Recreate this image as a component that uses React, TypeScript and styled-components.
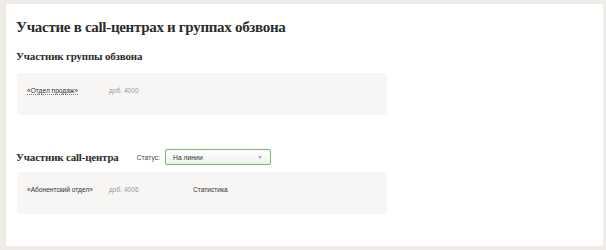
import styled, { createGlobalStyle } from "styled-components";

const GlobalStyle = createGlobalStyle`
  html, body {
    margin: 0;
    padding: 0;
    background: #efece7;
  }
  body {
    font-family: "Liberation Sans", Arial, sans-serif;
    color: #222;
  }
`;

const Page = styled.div`
  width: 606px;
  height: 250px;
  padding: 4px 3px 4px 6px;
  box-sizing: border-box;
`;

const Panel = styled.div`
  background: #fff;
  height: 242px;
  width: 597px;
  box-sizing: border-box;
  padding: 13px 10px 0 10px;
`;

const Title = styled.h1`
  margin: 0;
  font-family: "Liberation Serif", serif;
  font-weight: 700;
  font-size: 15px;
  letter-spacing: -0.3px;
  line-height: 20px;
  color: #2b2b2b;
`;

const SectionHead = styled.div<{ $top: number }>`
  display: flex;
  align-items: center;
  margin-top: ${(p) => p.$top}px;
  height: 18px;
`;

const Subtitle = styled.h2`
  margin: 0;
  font-family: "Liberation Serif", serif;
  font-weight: 700;
  font-size: 10.9px;
  letter-spacing: -0.15px;
  color: #2b2b2b;
`;

const StatusLabel = styled.span`
  font-size: 6.8px;
  color: #444;
  margin-left: 18px;
`;

const Select = styled.div`
  margin-left: 5px;
  width: 106px;
  height: 16px;
  box-sizing: border-box;
  border: 1px solid #7cbc6e;
  border-radius: 2px;
  background: linear-gradient(#ffffff, #eef0ee);
  box-shadow: 0 0 1px #9fd18f;
  display: flex;
  align-items: center;
  justify-content: space-between;
  padding: 0 8px 0 7px;
  font-size: 6.8px;
  color: #333;
`;

const Arrow = styled.span`
  width: 0;
  height: 0;
  border-left: 2px solid transparent;
  border-right: 2px solid transparent;
  border-top: 3px solid #aaa;
`;

const Card = styled.div<{ $top: number }>`
  margin-top: ${(p) => p.$top}px;
  margin-left: 1px;
  width: 370px;
  height: 42px;
  box-sizing: border-box;
  background: #f7f6f4;
  border-radius: 4px;
  padding: 13px 10px 0 10px;
  display: flex;
  align-items: flex-start;
  font-size: 6.6px;
  line-height: 10px;
`;

const Name = styled.span<{ $w: number; $dotted?: boolean }>`
  width: ${(p) => p.$w}px;
  color: #333;
  span {
    border-bottom: ${(p) => (p.$dotted ? "1px dotted #777" : "none")};
  }
`;

const Ext = styled.span<{ $w: number }>`
  width: ${(p) => p.$w}px;
  color: #999;
`;

const Link = styled.span`
  color: #333;
`;

export default function App() {
  return (
    <>
      <GlobalStyle />
      <Page>
        <Panel>
          <Title>Участие в call-центрах и группах обзвона</Title>
          <SectionHead $top={10}>
            <Subtitle>Участник группы обзвона</Subtitle>
          </SectionHead>
          <Card $top={8}>
            <Name $w={82} $dotted>
              <span>«Отдел продаж»</span>
            </Name>
            <Ext $w={80}>доб. 4000</Ext>
          </Card>
          <SectionHead $top={33}>
            <Subtitle>Участник call-центра</Subtitle>
            <StatusLabel>Статус:</StatusLabel>
            <Select>
              <span>На линии</span>
              <Arrow />
            </Select>
          </SectionHead>
          <Card $top={6}>
            <Name $w={82}>
              <span>«Абонентский отдел»</span>
            </Name>
            <Ext $w={84}>доб. 4006</Ext>
            <Link>Статистика</Link>
          </Card>
        </Panel>
      </Page>
    </>
  );
}
